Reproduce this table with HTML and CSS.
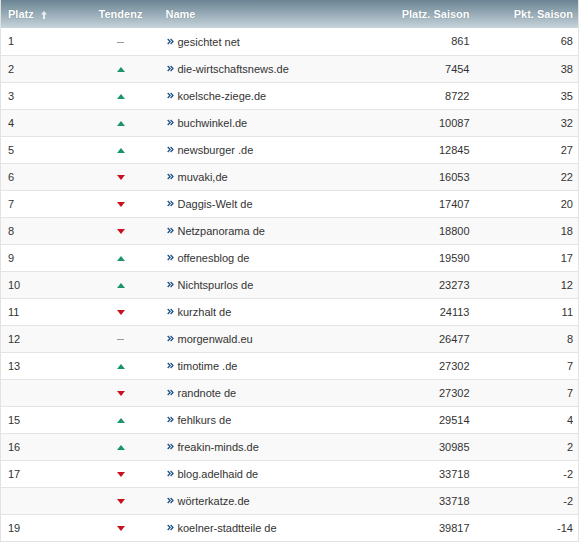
FILE: index.html
```html
<!DOCTYPE html>
<html>
<head>
<meta charset="utf-8">
<link rel="stylesheet" href="styles.css">
</head>
<body>
<table class="rank">
  <colgroup>
    <col class="c-platz"><col class="c-tend"><col class="c-name"><col class="c-ps"><col class="c-pk">
  </colgroup>
  <thead>
    <tr>
      <th class="l">Platz <svg class="sort" width="6" height="8" viewBox="0 0 6 8"><path d="M3 0 L6 3.5 H4 V8 H2 V3.5 H0 Z" fill="#fff" fill-opacity="0.8"/></svg></th>
      <th class="c">Tendenz</th>
      <th class="l">Name</th>
      <th class="r">Platz. Saison</th>
      <th class="r">Pkt. Saison</th>
    </tr>
  </thead>
  <tbody id="rows"></tbody>
</table>
<script src="script.js"></script>
</body>
</html>
```

FILE: script.js
```js
const data = [
  ["1","n","gesichtet net","861","68"],
  ["2","u","die-wirtschaftsnews.de","7454","38"],
  ["3","u","koelsche-ziege.de","8722","35"],
  ["4","u","buchwinkel.de","10087","32"],
  ["5","u","newsburger .de","12845","27"],
  ["6","d","muvaki,de","16053","22"],
  ["7","d","Daggis-Welt de","17407","20"],
  ["8","d","Netzpanorama de","18800","18"],
  ["9","u","offenesblog de","19590","17"],
  ["10","u","Nichtspurlos de","23273","12"],
  ["11","d","kurzhalt de","24113","11"],
  ["12","n","morgenwald.eu","26477","8"],
  ["13","u","timotime .de","27302","7"],
  ["","d","randnote de","27302","7"],
  ["15","u","fehlkurs de","29514","4"],
  ["16","u","freakin-minds.de","30985","2"],
  ["17","d","blog.adelhaid de","33718","-2"],
  ["","d","wörterkatze.de","33718","-2"],
  ["19","d","koelner-stadtteile de","39817","-14"]
];
const icons = {
  u: '<svg width="8" height="5" viewBox="0 0 8 5"><path d="M4 0 L8 5 H0 Z" fill="#1a9469"/></svg>',
  d: '<svg width="8" height="5" viewBox="0 0 8 5"><path d="M0 0 H8 L4 5 Z" fill="#c8101e"/></svg>',
  n: '<span class="dash"></span>'
};
const chev = '<svg class="chev" width="7" height="7" viewBox="0 0 7 7"><path d="M0.7 1 L3.1 3.5 L0.7 6 M3.6 1 L6 3.5 L3.6 6" fill="none" stroke="#1f5383" stroke-width="1.3"/></svg>';
const tb = document.getElementById('rows');
tb.innerHTML = data.map(r =>
  `<tr><td class="l">${r[0]}</td><td class="c">${icons[r[1]]}</td><td class="l"><span class="nm">${chev}${r[2]}</span></td><td class="r">${r[3]}</td><td class="r">${r[4]}</td></tr>`
).join('');
```

FILE: styles.css
```css
html, body { margin: 0; padding: 0; background: #fff; }
body { font-family: "Liberation Sans", Arial, sans-serif; }
.rank {
  border-collapse: collapse;
  width: 579px;
  table-layout: fixed;
  font-size: 11px;
  color: #333;
  border: 1px solid #e2e2e2;
  border-top: none;
}
.c-platz { width: 80px; }
.c-tend { width: 80px; }
.c-name { width: auto; }
.c-ps { width: 130px; }
.c-pk { width: 104px; }
thead th {
  height: 28px;
  padding: 0 5px 0 7px;
  background: linear-gradient(to bottom, #6a8493 0%, #9db0bb 55%, #c7d4db 100%);
  color: #fff;
  font-weight: bold;
  font-size: 11px;
  text-shadow: 0 0 1px rgba(60,80,90,0.5);
  box-sizing: border-box;
}
th.r, td.r { text-align: right; padding-right: 5px; padding-left: 0; }
th.l, td.l { text-align: left; }
th.c, td.c { text-align: center; padding-left: 0; padding-right: 0; }
th.l:nth-child(3), td.l:nth-child(3) { padding-left: 5px; }
.sort { margin-left: 4px; vertical-align: -1px; }
tbody td {
  height: 27px;
  padding: 0 5px 0 7px;
  border-top: 1px solid #e4e4e4;
  box-sizing: border-box;
  white-space: nowrap;
}
tbody tr:first-child td { border-top: none; }
tbody tr:nth-child(even) td { background: #f9f9f9; }
tbody td.c svg { display: inline-block; vertical-align: middle; }
.dash { display: inline-block; width: 7px; height: 1px; background: #999; vertical-align: middle; }
.nm { display: inline-flex; align-items: center; }
.chev { margin-left: 1px; margin-right: 4px; }
```
